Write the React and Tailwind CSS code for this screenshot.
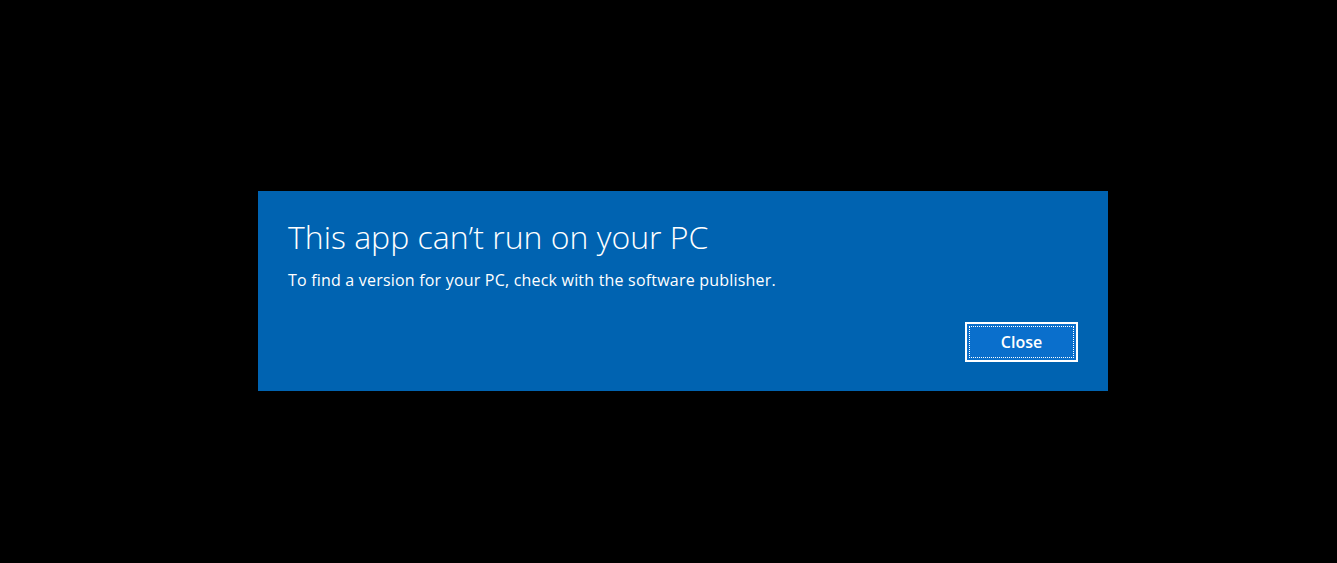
export default function App() {
  return (
    <div className="w-[1337px] h-[563px] bg-black pt-[191px] pl-[258px]" style={{ fontFamily: '"Open Sans", "Noto Sans", sans-serif' }}>
      {/* Dialog */}
      <div className="w-[850px] h-[200px] bg-[#0063b1] text-white flex flex-col px-[30px]">
        <h1 className="mt-[26px] text-[32px] leading-[40px] font-light">
          This app can’t run on your PC
        </h1>
        <p className="mt-[13px] text-[16px] leading-[20px] tracking-[0.2px]">
          To find a version for your PC, check with the software publisher.
        </p>
        <div className="mt-auto mb-[29px] flex justify-end">
          <button className="w-[113px] h-[40px] border-2 border-white bg-[#0a6fcc] p-[2px]">
            <span className="flex h-full w-full items-center justify-center border border-dotted border-white text-[16px] font-semibold">
              Close
            </span>
          </button>
        </div>
      </div>
    </div>
  );
}
